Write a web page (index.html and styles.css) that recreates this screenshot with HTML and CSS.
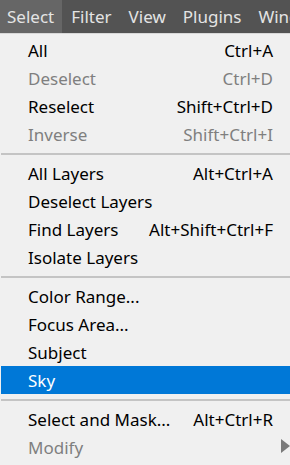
FILE: index.html
```html
<!DOCTYPE html>
<html lang="en">
<head>
    <meta charset="UTF-8">
    <meta name="viewport" content="width=device-width, initial-scale=1.0">
    <title>Select Menu</title>
    <link rel="stylesheet" href="styles.css">
</head>
<body>
    <div class="menubar">
        <span class="menubar-item active">Select</span>
        <span class="menubar-item">Filter</span>
        <span class="menubar-item">View</span>
        <span class="menubar-item">Plugins</span>
        <span class="menubar-item">Window</span>
    </div>
    <div class="menu">
        <div class="item"><span>All</span><span class="key">Ctrl+A</span></div>
        <div class="item disabled"><span>Deselect</span><span class="key">Ctrl+D</span></div>
        <div class="item"><span>Reselect</span><span class="key">Shift+Ctrl+D</span></div>
        <div class="item disabled"><span>Inverse</span><span class="key">Shift+Ctrl+I</span></div>
        <div class="sep"></div>
        <div class="item"><span>All Layers</span><span class="key">Alt+Ctrl+A</span></div>
        <div class="item"><span>Deselect Layers</span></div>
        <div class="item"><span>Find Layers</span><span class="key">Alt+Shift+Ctrl+F</span></div>
        <div class="item"><span>Isolate Layers</span></div>
        <div class="sep"></div>
        <div class="item"><span>Color Range...</span></div>
        <div class="item"><span>Focus Area...</span></div>
        <div class="item"><span>Subject</span></div>
        <div class="item selected"><span>Sky</span></div>
        <div class="sep"></div>
        <div class="item"><span>Select and Mask...</span><span class="key">Alt+Ctrl+R</span></div>
        <div class="item disabled submenu"><span>Modify</span></div>
    </div>
</body>
</html>
```

FILE: styles.css
```css
body {
    margin: 0;
    width: 290px;
    height: 465px;
    overflow: hidden;
    background: #f0f0f0;
    font-family: "Noto Sans", "Open Sans", sans-serif;
    font-size: 17px;
}

/* Top menu bar */
.menubar {
    display: flex;
    height: 33px;
    background: #535353;
    border-bottom: 1px solid #d8d8d8;
    white-space: nowrap;
    overflow: hidden;
}

.menubar-item {
    display: flex;
    align-items: center;
    padding: 0 8px 0 9px;
    color: #e4e4e4;
    font-size: 17px;
}

.menubar-item.active {
    padding-left: 7px;
    background: #666666;
}

/* Dropdown */
.menu {
    padding: 2px 0 0 1px;
}

.item {
    position: relative;
    display: flex;
    justify-content: space-between;
    align-items: center;
    height: 28px;
    padding: 0 17px 0 27px;
    color: #000;
    white-space: nowrap;
}

.item.disabled {
    color: #7f7f7f;
}

.item.selected {
    background: #0078d7;
    color: #fff;
}

.submenu::after {
    content: '';
    position: absolute;
    right: 0;
    top: 6px;
    border-top: 7px solid transparent;
    border-bottom: 7px solid transparent;
    border-left: 9px solid #7a7a7a;
}

.sep {
    height: 2px;
    margin: 5px 0 4px;
    background: #c4c4c4;
}
```
